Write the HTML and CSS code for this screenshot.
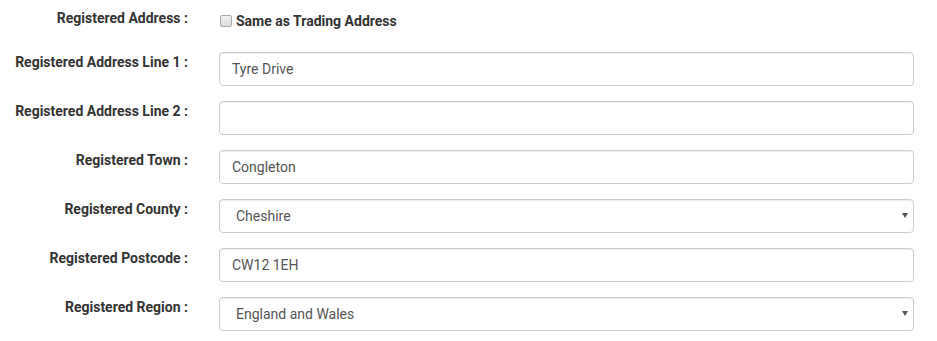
FILE: index.html
```html
<!DOCTYPE html>
<html lang="en">
<head>
<meta charset="utf-8">
<title>Registered Address</title>
<link rel="stylesheet" href="styles.css">
</head>
<body>
<form class="form">
  <div class="row row-check">
    <label class="label">Registered Address :</label>
    <div class="field check-field">
      <label class="check"><input type="checkbox" class="check-box"><span>Same as Trading Address</span></label>
    </div>
  </div>
  <div class="row">
    <label class="label">Registered Address Line 1 :</label>
    <div class="field"><input class="control" type="text" value="Tyre Drive"></div>
  </div>
  <div class="row">
    <label class="label">Registered Address Line 2 :</label>
    <div class="field"><input class="control" type="text" value=""></div>
  </div>
  <div class="row">
    <label class="label">Registered Town :</label>
    <div class="field"><input class="control" type="text" value="Congleton"></div>
  </div>
  <div class="row">
    <label class="label">Registered County :</label>
    <div class="field select-wrap">
      <select class="control select"><option>Cheshire</option></select>
      <span class="caret"></span>
    </div>
  </div>
  <div class="row">
    <label class="label">Registered Postcode :</label>
    <div class="field"><input class="control" type="text" value="CW12 1EH"></div>
  </div>
  <div class="row">
    <label class="label">Registered Region :</label>
    <div class="field select-wrap">
      <select class="control select"><option>England and Wales</option></select>
      <span class="caret"></span>
    </div>
  </div>
</form>
</body>
</html>
```
FILE: styles.css
```css
html, body {
  margin: 0;
  padding: 0;
  background: #ffffff;
}
body {
  font-family: Roboto, "Liberation Sans", Arial, sans-serif;
  font-size: 14px;
  line-height: 20px;
  color: #333333;
}
.form {
  display: flex;
  flex-direction: column;
  gap: 15px;
  padding-top: 8px;
}
.row {
  display: grid;
  grid-template-columns: 188px 695px;
  column-gap: 31px;
  align-items: start;
}
.row-check {
  height: 29px;
}
.label {
  text-align: right;
  font-weight: 700;
  color: #333333;
  white-space: nowrap;
}
.field {
  min-width: 0;
}
.check-field {
  padding-top: 3px;
}
.check {
  display: flex;
  align-items: center;
  font-weight: 700;
  color: #333333;
}
.check-box {
  -webkit-appearance: none;
  appearance: none;
  box-sizing: border-box;
  width: 12px;
  height: 12px;
  margin: 0 4px 0 1px;
  border: 1px solid #a9a9a9;
  border-radius: 2px;
  background: linear-gradient(#f0f0f0, #dcdcdc);
}
.control {
  display: block;
  box-sizing: border-box;
  width: 100%;
  height: 34px;
  margin: 0;
  padding: 6px 12px;
  border: 1px solid #cccccc;
  border-radius: 4px;
  background: #ffffff;
  font-family: Roboto, "Liberation Sans", Arial, sans-serif;
  font-size: 14px;
  line-height: 20px;
  color: #555555;
  box-shadow: inset 0 1px 1px rgba(0, 0, 0, 0.075);
  outline: none;
}
.select-wrap {
  position: relative;
}
.select {
  -webkit-appearance: none;
  appearance: none;
  padding-left: 16px;
}
.caret {
  position: absolute;
  right: 6px;
  top: 14px;
  width: 0;
  height: 0;
  border-left: 3.5px solid transparent;
  border-right: 3.5px solid transparent;
  border-top: 5px solid #555555;
  pointer-events: none;
}
```
